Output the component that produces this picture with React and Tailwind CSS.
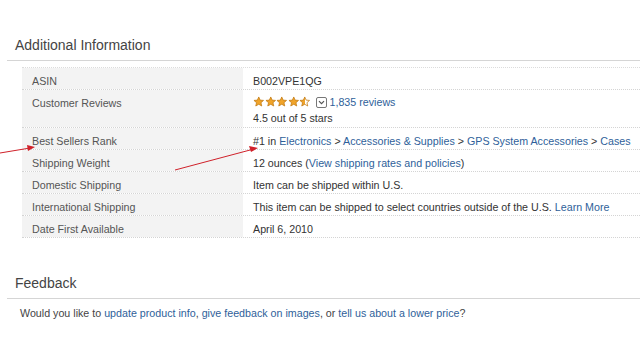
const LINK = 'text-[#2f5f9a]'

const rows = [
  { label: 'ASIN', value: <>B002VPE1QG</> },
  {
    label: 'Customer Reviews',
    tall: true,
    value: (
      <div className="flex flex-col">
        <div className="flex items-center gap-[3px] h-[14px]">
          <Stars />
          <DropBox />
          <span className={LINK}>1,835 reviews</span>
        </div>
        <span className="mt-[2px] leading-[14px]">4.5 out of 5 stars</span>
      </div>
    ),
  },
  {
    label: 'Best Sellers Rank',
    value: (
      <>
        #1 in <span className={LINK}>Electronics</span> &gt;{' '}
        <span className={LINK}>Accessories &amp; Supplies</span> &gt;{' '}
        <span className={LINK}>GPS System Accessories</span> &gt;{' '}
        <span className={LINK}>Cases</span>
      </>
    ),
  },
  {
    label: 'Shipping Weight',
    value: (
      <>
        12 ounces (<span className={LINK}>View shipping rates and policies</span>)
      </>
    ),
  },
  { label: 'Domestic Shipping', value: <>Item can be shipped within U.S.</> },
  {
    label: 'International Shipping',
    value: (
      <>
        This item can be shipped to select countries outside of the U.S.{' '}
        <span className={LINK}>Learn More</span>
      </>
    ),
  },
  { label: 'Date First Available', value: <>April 6, 2010</> },
]

function Star({ fill }) {
  // outlined star; fill = 1 full, 0.5 half
  const id = `s${fill}`
  return (
    <svg width="11.5" height="11.5" viewBox="0 0 24 24">
      <defs>
        <linearGradient id={id}>
          <stop offset={`${fill * 100}%`} stopColor="#f0a42a" />
          <stop offset={`${fill * 100}%`} stopColor="#fff" />
        </linearGradient>
      </defs>
      <path
        d="M12 2l2.9 6.6 7.1.6-5.4 4.7 1.6 7-6.2-3.7-6.2 3.7 1.6-7L2 9.2l7.1-.6z"
        fill={`url(#${id})`}
        stroke="#c27a12"
        strokeWidth="1.6"
        strokeLinejoin="round"
      />
    </svg>
  )
}

function Stars() {
  return (
    <div className="flex">
      <Star fill={1} />
      <Star fill={1} />
      <Star fill={1} />
      <Star fill={1} />
      <Star fill={0.5} />
    </div>
  )
}

function DropBox() {
  return (
    <svg width="11" height="11" viewBox="0 0 11 11" className="ml-[2px]">
      <rect x="0.5" y="0.5" width="10" height="10" rx="1.5" fill="#fff" stroke="#777" />
      <path d="M3 4.2l2.5 2.5L8 4.2" fill="none" stroke="#555" strokeWidth="1.2" />
    </svg>
  )
}

function Arrows() {
  return (
    <svg className="absolute left-0 top-0 pointer-events-none" width="640" height="354">
      <g stroke="#d0212a" strokeWidth="1" fill="#d0212a">
        <line x1="0" y1="153" x2="30" y2="148" />
        <polygon points="35,147 27,145 28,151" stroke="none" />
        <line x1="175" y1="170" x2="252" y2="149.5" />
        <polygon points="258,148 249,146 251,152" stroke="none" />
      </g>
    </svg>
  )
}

export default function App() {
  return (
    <div
      className="relative w-[640px] h-[354px] bg-white overflow-hidden text-[10.7px] text-[#333]"
      style={{ fontFamily: '"Liberation Sans", Arial, sans-serif' }}
    >
      <div className="pl-[7px] pt-[35px]">
        <h2 className="pl-[8px] text-[14px] leading-[20px] text-[#444] font-normal">
          Additional Information
        </h2>
        <div className="mt-[5px] border-t border-[#d5d5d5]" />

        <div className="ml-[15px] mt-[6px] border-t border-dotted border-[#dcdcdc]">
          {rows.map((r) => (
            <div
              key={r.label}
              className={`flex border-b border-dotted border-[#d4d4d4] ${r.tall ? 'h-[38px]' : 'h-[22px]'}`}
            >
              <div className="w-[221px] shrink-0 bg-[#f3f3f3] pl-[10px] pt-[5px] text-[#555]">
                {r.label}
              </div>
              <div className="pl-[10px] pt-[5px] whitespace-nowrap">{r.value}</div>
            </div>
          ))}
        </div>

        <h2 className="mt-[35px] pl-[8px] text-[14px] leading-[20px] text-[#444] font-normal">
          Feedback
        </h2>
        <div className="mt-[5px] border-t border-[#d5d5d5]" />
        <p className="pl-[13px] mt-[6px] text-[#444]">
          Would you like to <span className={LINK}>update product info</span>,{' '}
          <span className={LINK}>give feedback on images</span>, or{' '}
          <span className={LINK}>tell us about a lower price</span>?
        </p>
      </div>
      <Arrows />
    </div>
  )
}
